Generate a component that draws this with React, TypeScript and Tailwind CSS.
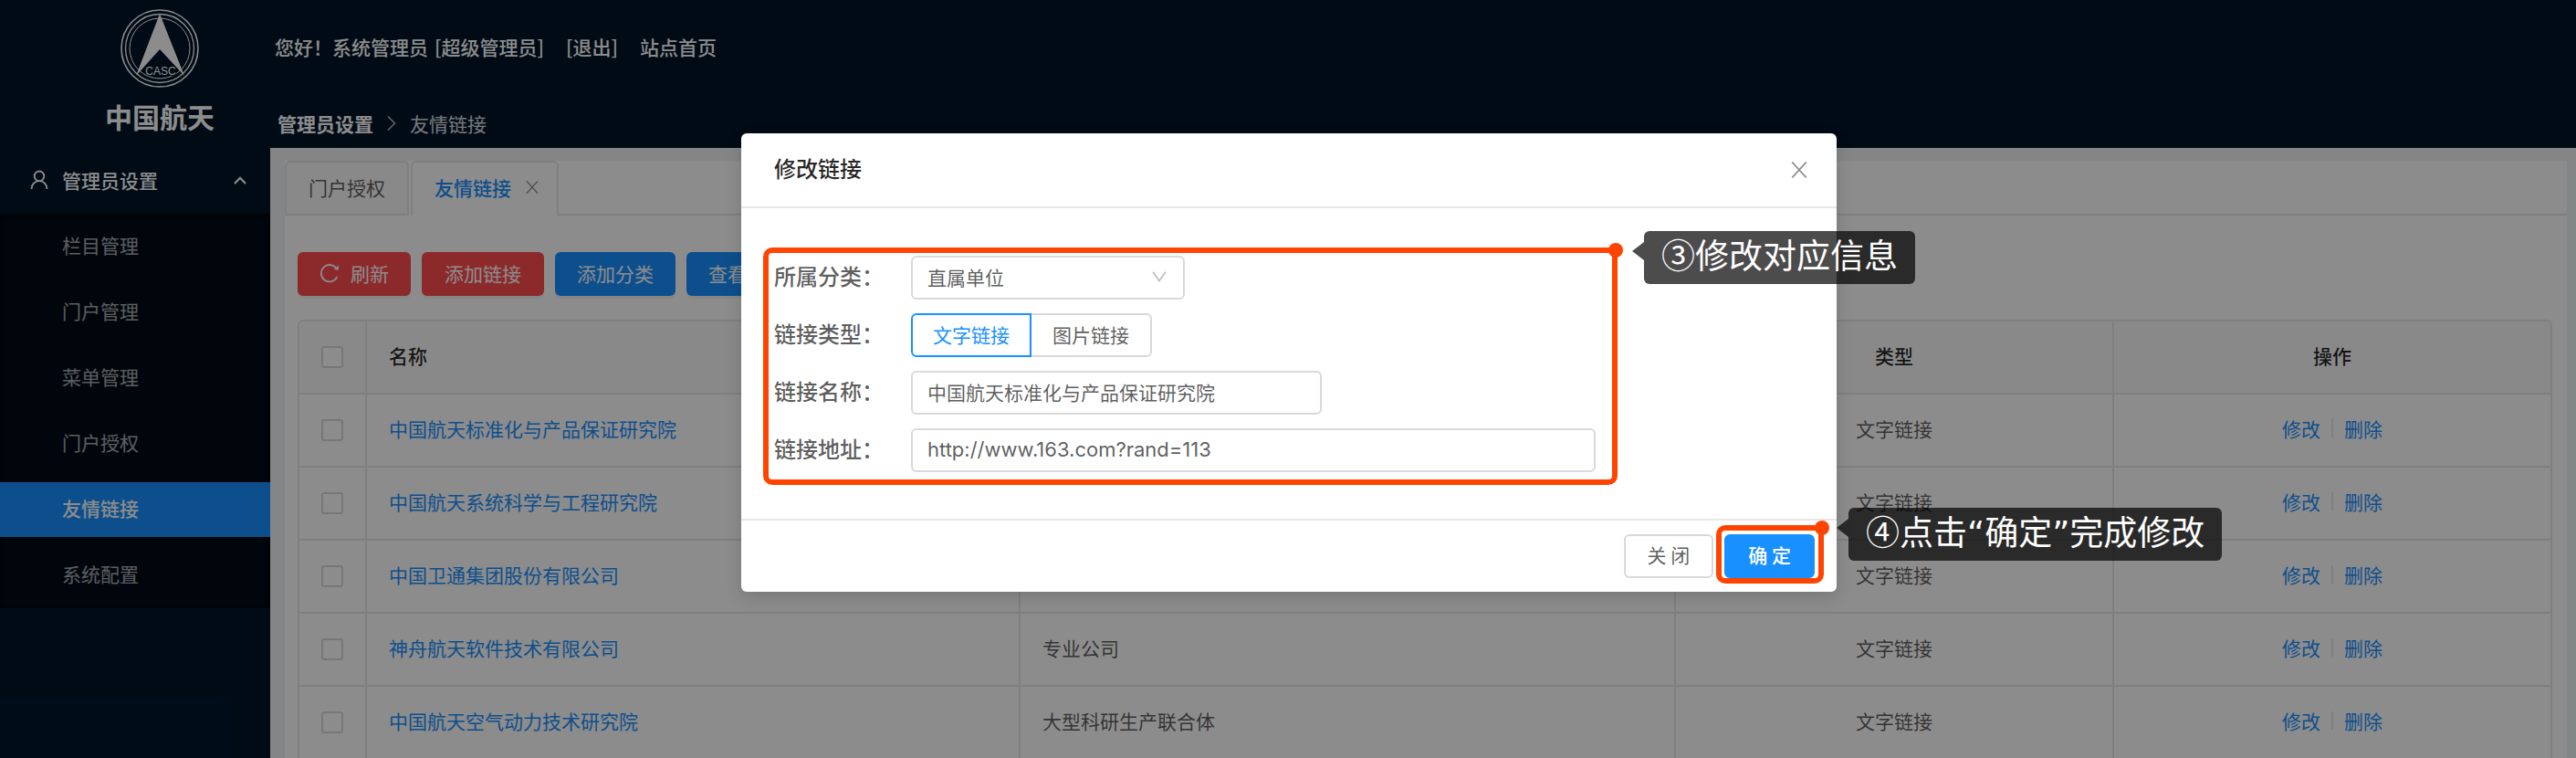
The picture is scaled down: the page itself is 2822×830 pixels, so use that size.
import type { ReactNode } from "react";

const submenu = ["栏目管理", "门户管理", "菜单管理", "门户授权", "友情链接", "系统配置"];

const rows = [
  { name: "中国航天标准化与产品保证研究院", group: "直属单位" },
  { name: "中国航天系统科学与工程研究院", group: "直属单位" },
  { name: "中国卫通集团股份有限公司", group: "专业公司" },
  { name: "神舟航天软件技术有限公司", group: "专业公司" },
  { name: "中国航天空气动力技术研究院", group: "大型科研生产联合体" },
];

function Logo() {
  return (
    <svg viewBox="0 0 86 86" className="size-[86px]" role="img" aria-label="CASC">
      <g fill="none" stroke="#fff">
        <circle cx="43" cy="43" r="42" strokeWidth="1.6" />
        <circle cx="43" cy="43" r="37.5" strokeWidth="1.3" />
        <circle cx="43" cy="43" r="33" strokeWidth="1" />
      </g>
      <path d="M43 5 L70 73 L43 44 L17 73 Z" fill="#fff" />
      <text x="44" y="72" fontSize="12" textAnchor="middle" fill="#fff" stroke="#001529" strokeWidth="2" paintOrder="stroke" fontFamily="Liberation Sans">
        CASC
      </text>
    </svg>
  );
}

function UserIcon() {
  return (
    <svg viewBox="0 0 20 22" className="h-[22px] w-5" fill="none" stroke="currentColor" strokeWidth="1.9" aria-hidden="true">
      <circle cx="10" cy="6.8" r="5.3" />
      <path d="M1.500 21c.2-5 3.600-8.900 8.500-8.900s8.300 3.900 8.500 8.900" />
    </svg>
  );
}

function CloseIcon({ className }: { className: string }) {
  return (
    <svg viewBox="0 0 18 18" className={className} fill="none" stroke="currentColor" strokeWidth="1.8" aria-hidden="true">
      <path d="M1.200.5l15.600 17M16.800.5l-15.600 17" />
    </svg>
  );
}

function ReloadIcon() {
  return (
    <svg viewBox="0 0 22 22" className="size-[22px]" fill="none" stroke="currentColor" strokeWidth="1.8" aria-hidden="true">
      <path d="M19.300 15.200A9.200 9.200 0 1 1 18.600 6" />
      <path d="M20.800 2.600v5.200l-5-1z" fill="currentColor" stroke="none" />
    </svg>
  );
}

function Callout({ className, children }: { className: string; children: ReactNode }) {
  return (
    <div className={`absolute flex whitespace-nowrap ${className}`}>
      <svg viewBox="0 0 13 20" className="mt-3 h-5 w-[13px]" aria-hidden="true">
        <path d="M13 0v20L0 10z" fill="rgba(0,0,0,.7)" />
      </svg>
      <div className="h-[58px] rounded-md bg-black/70 px-[19px] text-[37px] leading-[50px] text-white">{children}</div>
    </div>
  );
}

function Marker({ className }: { className: string }) {
  return (
    <div className={`pointer-events-none absolute rounded-[10px] border-[6px] border-[#ff4400] ${className}`}>
      <span className="absolute -top-[11px] -right-3 size-4 rounded-full bg-[#ff4400]" />
    </div>
  );
}

function Sidebar() {
  return (
    <aside className="w-[296px] shrink-0 bg-[#001529] text-white">
      <div className="flex h-[162px] flex-col items-center gap-1.5 pt-2.5 pl-[54px]">
        <Logo />
        <div className="text-[30px] leading-[50px] font-bold">中国航天</div>
      </div>
      <nav>
        <button type="button" className="flex h-[72px] w-full items-center pr-[26px] pb-0.5 pl-[33px] font-medium">
          <UserIcon />
          <span className="ml-[15px] flex-1 text-left">管理员设置</span>
          <svg viewBox="0 0 14 9" className="h-[9px] w-3.5" fill="none" stroke="currentColor" strokeWidth="2.200" aria-hidden="true">
            <path d="M1 8l6-6.200L13 8" />
          </svg>
        </button>
        <ul className="bg-[#000c17] shadow-[inset_0_3px_12px_rgba(0,0,0,0.45)]">
          {submenu.map((item) => (
            <li key={item} className="py-1.5">
              <a
                href="#"
                className={
                  item === "友情链接"
                    ? "block h-[60px] bg-[#1890ff] pl-[68px] leading-[57px] font-medium text-white"
                    : "block h-[60px] pl-[68px] leading-[57px] text-white/65"
                }
              >
                {item}
              </a>
            </li>
          ))}
        </ul>
      </nav>
    </aside>
  );
}

function TopBar() {
  return (
    <header className="h-[162px] bg-[#001529] text-white">
      <div className="flex h-[110px] items-center pb-2 pl-[5px] font-medium">
        <span>您好！</span>
        <span>系统管理员</span>
        <span className="ml-[7px]">[超级管理员]</span>
        <a href="#" className="ml-6">[退出]</a>
        <a href="#" className="ml-6">站点首页</a>
      </div>
      <nav className="flex h-[50px] items-center pl-2">
        <a href="#" className="font-bold">管理员设置</a>
        <svg viewBox="0 0 10 16" className="mx-[15px] h-4 w-2.5 text-white/70" fill="none" stroke="currentColor" strokeWidth="1.500" aria-hidden="true">
          <path d="M1 .5l7.500 7.500L1 15.500" />
        </svg>
        <span className="text-white/85">友情链接</span>
      </nav>
    </header>
  );
}

const box = "block size-6 appearance-none rounded-[3px] border-2 border-[#d9d9d9] bg-white mx-auto";
const cell = "h-20 border-r-2 border-b-2 border-[#e8e8e8] p-0";
const textCell = "h-20 border-r-2 border-b-2 border-[#e8e8e8] px-6 pt-0 pb-[5px]";

function LinkTable() {
  return (
    <table className="w-full table-fixed border-separate border-spacing-0 rounded-t-md border-t-2 border-l-2 border-[#e8e8e8]">
      <colgroup>
        <col className="w-[74px]" />
        <col className="w-[716px]" />
        <col className="w-[718px]" />
        <col className="w-[480px]" />
        <col className="w-[480px]" />
      </colgroup>
      <thead className="bg-[#fafafa] text-black/85">
        <tr>
          <th className={`${cell} rounded-tl-md`}>
            <input type="checkbox" aria-label="全选" className={box} />
          </th>
          <th className={`${textCell} text-left font-medium`}>名称</th>
          <th className={`${textCell} text-left font-medium`}>分类</th>
          <th className={`${textCell} text-center font-medium`}>类型</th>
          <th className={`${textCell} rounded-tr-md text-center font-medium`}>操作</th>
        </tr>
      </thead>
      <tbody>
        {rows.map((row) => (
          <tr key={row.name}>
            <td className={cell}>
              <input type="checkbox" aria-label={row.name} className={box} />
            </td>
            <td className={textCell}>
              <a href="#" className="text-[#1890ff]">{row.name}</a>
            </td>
            <td className={textCell}>{row.group}</td>
            <td className={`${textCell} text-center`}>文字链接</td>
            <td className={textCell}>
              <div className="flex items-center justify-center gap-3">
                <a href="#" className="text-[#1890ff]">修改</a>
                <span className="h-5 w-0.5 bg-[#e8e8e8]" />
                <a href="#" className="text-[#1890ff]">删除</a>
              </div>
            </td>
          </tr>
        ))}
      </tbody>
    </table>
  );
}

const action = "flex h-12 items-center rounded-md pb-[3px] shadow-[0_3px_0_rgba(0,0,0,0.045)]";

function LinksPage() {
  return (
    <main className="flex-1 bg-[#f0f2f5] pt-3.5 pr-2.5 pl-4">
      <div className="h-full bg-white">
        <div className="flex h-[60px] gap-0.5">
          <button type="button" className="rounded-t-md border-2 border-[#e8e8e8] bg-[#fafafa] px-6 pb-0.5">门户授权</button>
          <div className="flex items-center gap-4 rounded-t-md border-2 border-b-0 border-[#e8e8e8] bg-white pr-5 pb-1 pl-6">
            <a href="#" className="font-medium text-[#1890ff]">友情链接</a>
            <button type="button" aria-label="关闭标签" className="text-black/45">
              <CloseIcon className="size-3.5" />
            </button>
          </div>
          <div className="-ml-0.5 flex-1 border-b-2 border-[#e8e8e8]" />
        </div>
        <div className="pt-10 pr-4 pl-3.5">
          <div className="flex gap-3 text-white">
            <button type="button" className={`${action} gap-3 bg-[#ff4d4f] px-6`}>
              <ReloadIcon />
              刷新
            </button>
            <button type="button" className={`${action} bg-[#ff4d4f] px-[25px]`}>添加链接</button>
            <button type="button" className={`${action} bg-[#1890ff] px-6`}>添加分类</button>
            <button type="button" className={`${action} bg-[#1890ff] px-6`}>查看分类</button>
          </div>
          <div className="pt-[26px]">
            <LinkTable />
          </div>
        </div>
      </div>
    </main>
  );
}

const field = "h-12 rounded-md border-2 border-[#d9d9d9] bg-white px-4 pb-[3px]";
const label = "w-[150px] pb-1 text-[24px] font-medium";
const option = "flex h-12 w-[132px] items-center justify-center border-2 pb-[3px]";

function EditDialog() {
  return (
    <div role="dialog" aria-label="修改链接" className="w-[1200px] rounded-md bg-white shadow-[0_6px_18px_rgba(0,0,0,0.15)]">
      <div className="flex h-[82px] items-center justify-between border-b-2 border-[#e8e8e8] pr-8 pl-9">
        <h2 className="pb-1 text-[24px] font-medium text-black/85">修改链接</h2>
        <button type="button" aria-label="关闭" className="text-black/45">
          <CloseIcon className="size-[18px]" />
        </button>
      </div>
      <form className="relative flex flex-col gap-[15px] px-9 pt-[52px] pb-[51px]">
        <div className="flex items-center">
          <label htmlFor="category" className={label}>所属分类：</label>
          <div className="relative">
            <select id="category" className={`${field} w-[300px] appearance-none`}>
              <option>直属单位</option>
            </select>
            <svg viewBox="0 0 16 12" className="pointer-events-none absolute top-[17px] right-5 h-3 w-4 text-[#bfbfbf]" fill="none" stroke="currentColor" strokeWidth="1.800" aria-hidden="true">
              <path d="M1 .8l7 9.700 7-9.700" />
            </svg>
          </div>
        </div>
        <div role="radiogroup" aria-labelledby="kind-label" className="flex items-center">
          <span id="kind-label" className={label}>链接类型：</span>
          <label className={`${option} rounded-l-md border-[#1890ff] text-[#1890ff]`}>
            <input type="radio" name="kind" defaultChecked className="sr-only" />
            文字链接
          </label>
          <label className={`${option} rounded-r-md border-l-0 border-[#d9d9d9]`}>
            <input type="radio" name="kind" className="sr-only" />
            图片链接
          </label>
        </div>
        <div className="flex items-center">
          <label htmlFor="name" className={label}>链接名称：</label>
          <input id="name" defaultValue="中国航天标准化与产品保证研究院" className={`${field} w-[450px]`} />
        </div>
        <div className="flex items-center">
          <label htmlFor="url" className={label}>链接地址：</label>
          <input id="url" defaultValue="http://www.163.com?rand=113" className={`${field} w-[750px] font-['Inter'] text-[22px]`} />
        </div>
        <Marker className="top-[43px] left-6 h-[260px] w-[936px]" />
        <Callout className="top-[25px] left-[976px]">③修改对应信息</Callout>
      </form>
      <div className="relative flex h-20 items-center justify-end gap-3 border-t-2 border-[#e8e8e8] pr-6">
        <button type="button" className="h-12 rounded-md border-2 border-[#d9d9d9] bg-white px-6 pb-1">关 闭</button>
        <button type="button" className="h-12 rounded-md border-2 border-[#1890ff] bg-[#1890ff] px-6 pb-1 font-medium text-white">确 定</button>
        <Marker className="top-[5px] right-3.5 h-[64px] w-[118px]" />
        <Callout className="-top-3.5 left-[1200px]">
          ④点击<span className="font-['DejaVu_Sans']">“</span>确定<span className="font-['DejaVu_Sans']">”</span>完成修改
        </Callout>
      </div>
    </div>
  );
}

export default function App() {
  return (
    <div className="relative h-screen overflow-hidden font-['Noto_Sans_CJK_SC',sans-serif] text-[21px] leading-8 text-black/65">
      <div className="flex min-h-full">
        <Sidebar />
        <div className="flex flex-1 flex-col">
          <TopBar />
          <LinksPage />
        </div>
      </div>
      <div className="absolute inset-0 flex items-start justify-center bg-black/45 pt-[146px] pl-0.5">
        <EditDialog />
      </div>
    </div>
  );
}
